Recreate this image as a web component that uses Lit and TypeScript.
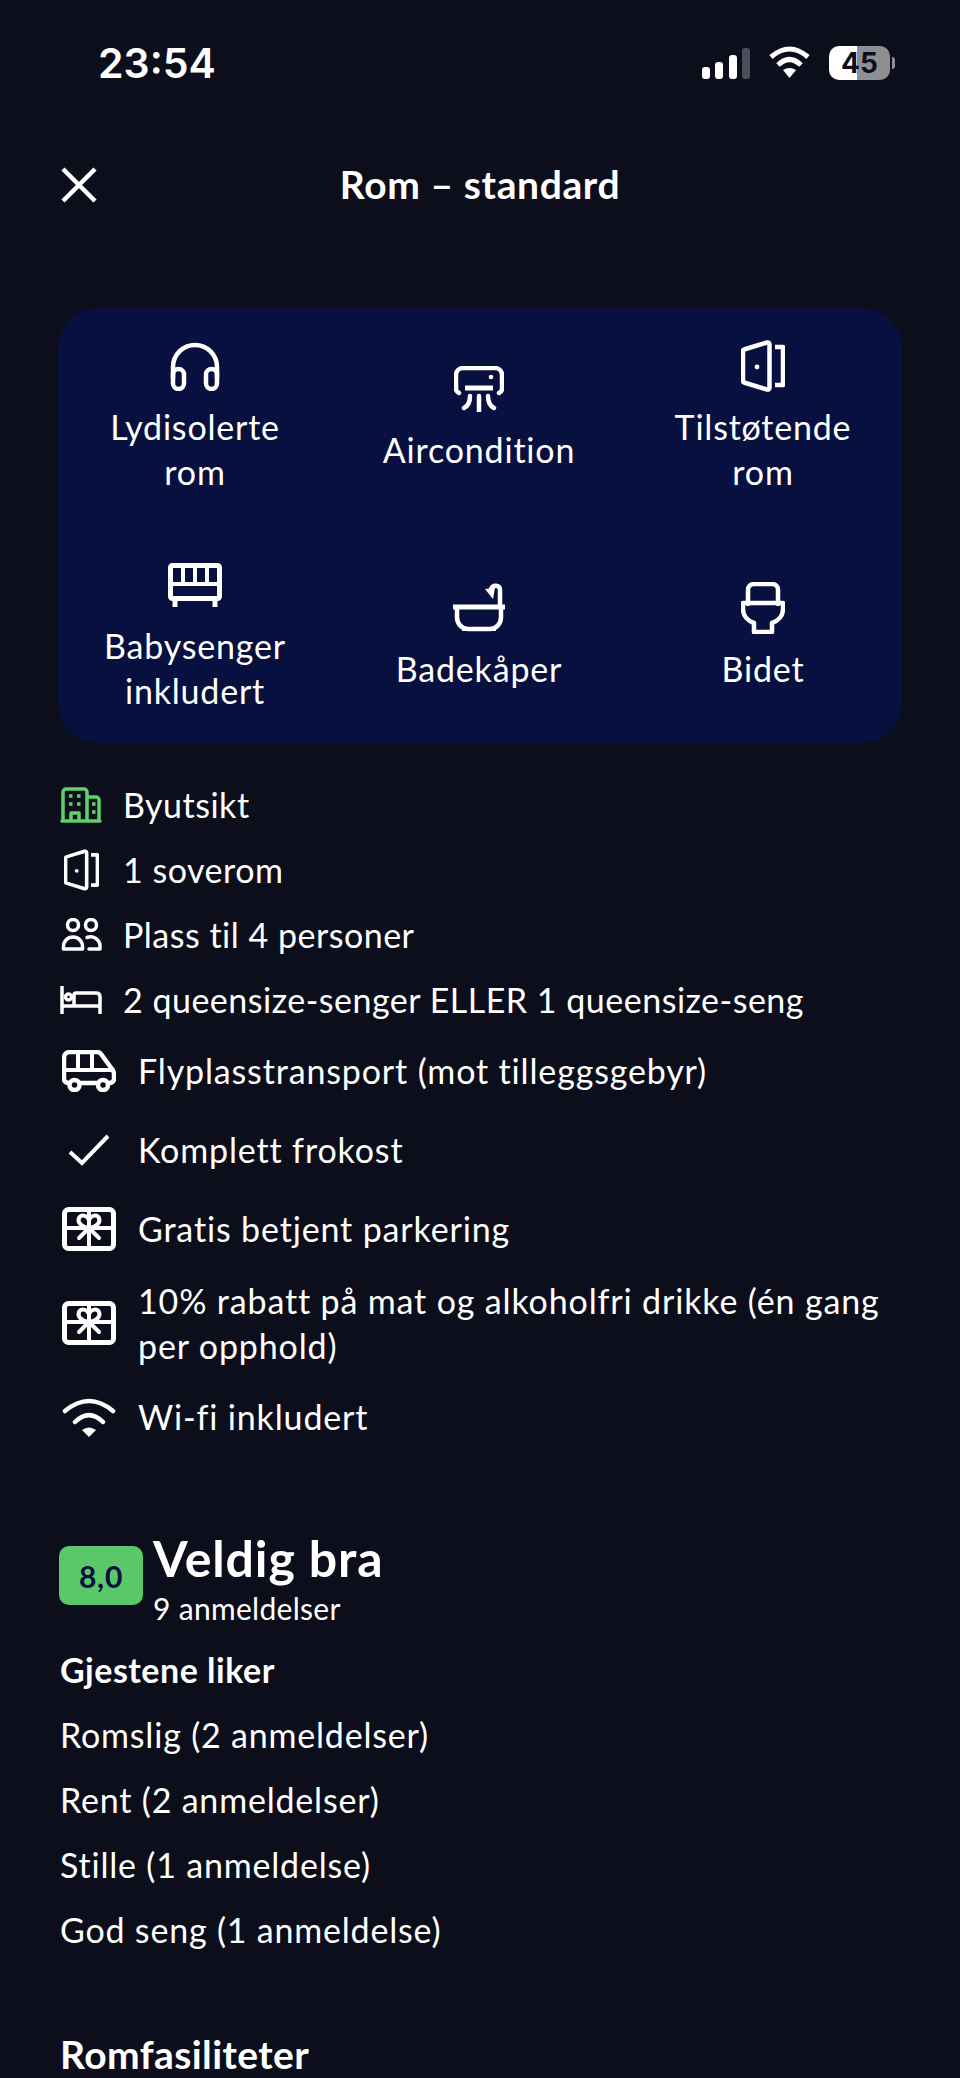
import { LitElement, html, css, svg } from "lit";
import { customElement } from "lit/decorators.js";

const I = (w: number, h: number, body: unknown, sw = 4.500, dw = w, dh = h) => html`<svg width=${dw} height=${dh} viewBox="0 0 ${w} ${h}" fill="none" stroke="currentColor" stroke-width=${sw} stroke-linecap="round" stroke-linejoin="round">${body}</svg>`;

const doorBody = svg`<path d="M3 9.500 26 2.500c1.500-.4 2.500.5 2.500 2V47.500c0 1.500-1 2.400-2.500 2L3 42.500c-.8-.3-1-.8-1-1.500V11c0-.7.2-1.200 1-1.500Z"/><path d="M34 7H42V45H34" stroke-linecap="butt"/><circle cx="16" cy="27" r="2.400" fill="currentColor" stroke="none"/>`;

const gift = I(54, 44, svg`<rect x="2.500" y="2.500" width="49" height="39" rx="4"/><path d="M2 21H52M27 2V42" stroke-width="4"/><path d="M27 21C20 20 15 16 17 11 19 7 25 8 27 13 29 8 35 7 37 11 39 16 34 20 27 21ZM27 21 17 31M27 21 37 31" stroke-width="4"/>`, 5);

const ICONS: Record<string, unknown> = {
  head: I(50, 49, svg`<path d="M3 36V25a22 22 0 0 1 44 0V36"/><rect x="3" y="27" width="11" height="20" rx="5.500"/><rect x="36" y="27" width="11" height="20" rx="5.500"/>`),
  ac: I(50, 46, svg`<path d="M5 27C3 26 2 24.500 2 23V9c0-4 3-7 7-7H41c4 0 7 3 7 7V23c0 1.500-1 3-3 4"/><path d="M11 22H39" stroke-width="5" stroke-linecap="butt"/><circle cx="37" cy="11" r="2.300" fill="currentColor" stroke="none"/><path d="M25 30V45M16 30C16 36 14 40 10 42M34 30C34 36 36 40 40 42"/>`),
  door: I(44, 52, doorBody),
  sdoor: I(44, 52, doorBody, 4.500, 35, 42),
  crib: I(54, 45, svg`<rect x="2.500" y="2.500" width="49" height="33" rx="2"/><path d="M15 2V20M27 2V20M39 2V20" stroke-width="4" stroke-linecap="butt"/><path d="M2 21H52" stroke-width="4"/><path d="M7 36V44M47 36V44" stroke-width="5" stroke-linecap="butt"/>`, 5),
  bath: I(54, 49, svg`<path d="M1 24H53" stroke-width="5" stroke-linecap="butt"/><path d="M5 25V34c0 7 5 12 11 12H38c6 0 11-5 11-12V25"/><path d="M48 23V7c0-5-7-6-9-1"/><path d="M33 6 43 5 41 16Z" fill="currentColor" stroke="none"/><path d="M12 45V48M42 45V48" stroke-width="4" stroke-linecap="butt"/>`),
  toilet: I(44, 52, svg`<path d="M7 22V8c0-3.500 2.500-6 6-6H31c3.500 0 6 2.500 6 6V22"/><path d="M2 21H42V27C42 34 37 39 31 41V50H13V41C7 39 2 34 2 27Z"/>`),
  city: I(42, 36, svg`<path d="M3 34V5a3 3 0 0 1 3-3H24a3 3 0 0 1 3 3V34M27 10H36a3 3 0 0 1 3 3V34M2 34H40M11 34V26H19V34" stroke-width="3.500"/><path d="M9 9h3.500M17 9h3.500M9 17h3.500M17 17h3.500M32 17h3.500M32 25h3.500" stroke-width="3.500" stroke-linecap="butt"/>`, 3.500),
  people: I(41, 33, svg`<circle cx="12" cy="7" r="5.500"/><path d="M2.500 31V28.500a9.500 9.500 0 0 1 19 0V31Z"/><circle cx="30" cy="7" r="5.500"/><path d="M26 19.500a9.500 9.500 0 0 1 13 9V31H28"/>`, 3.500),
  bed: I(42, 28, svg`<path d="M2 1V27M2 20H40M40 27V11c0-2.500-1.500-4-4-4H16c-1.500 0-2 1-2 2V20"/><circle cx="8.500" cy="11" r="3"/>`, 3.500),
  bus: I(54, 42, svg`<path d="M7 33C4 33 2 31.500 2 29V8c0-3.500 2.500-6 6-6H35c1.500 0 3 .6 4 2L50 19c1.500 2 2 3 2 5V29c0 2.500-2 4-5 4M18 33H35"/><path d="M2 20H51M16 2V20M30 2V20" stroke-width="4"/><circle cx="12.500" cy="35" r="5"/><circle cx="41" cy="35" r="5"/>`, 4.500),
  check: I(42, 32, svg`<path d="M2 18 14 29 40 2" stroke-linecap="butt" stroke-linejoin="miter"/>`, 4),
  gift,
  wifi: I(54, 40, svg`<path d="M3 14Q27-6 51 14M13 25Q27 11 41 25"/><path d="M20 33Q27 28 34 33L27 40Z" fill="currentColor" stroke="none"/>`, 4.500),
};

const AMENITIES = [
  ["head", "Lydisolerte rom"],
  ["ac", "Aircondition"],
  ["door", "Tilstøtende rom"],
  ["crib", "Babysenger inkludert"],
  ["bath", "Badekåper"],
  ["toilet", "Bidet"],
];
const SMALL = [
  ["city", "Byutsikt"],
  ["sdoor", "1 soverom"],
  ["people", "Plass til 4 personer"],
  ["bed", "2 queensize-senger ELLER 1 queensize-seng"],
];
const LARGE = [
  ["bus", "Flyplasstransport (mot tilleggsgebyr)"],
  ["check", "Komplett frokost"],
  ["gift", "Gratis betjent parkering"],
  ["gift", "10% rabatt på mat og alkoholfri drikke (én gang per opphold)"],
  ["wifi", "Wi-fi inkludert"],
];
const LIKES = ["Romslig (2 anmeldelser)", "Rent (2 anmeldelser)", "Stille (1 anmeldelse)", "God seng (1 anmeldelse)"];

@customElement("app-root")
export class AppRoot extends LitElement {
  static styles = css`
    :host { display: block; width: 960px; height: 2078px; overflow: hidden; background: #0c0e1b; color: #fff; font-family: "Lato", "Noto Sans", sans-serif; font-size: 34px; letter-spacing: 0.5px; }
    .status { height: 126px; box-sizing: border-box; padding: 43px 70px 0 98px; display: flex; justify-content: space-between; align-items: flex-start; letter-spacing: 0; }
    .time { font-family: "Inter", sans-serif; font-weight: 600; font-size: 41px; line-height: 40px; }
    .sys { display: flex; align-items: flex-start; gap: 19px; padding-top: 3px; }
    .bars { display: flex; align-items: flex-end; gap: 5.500px; height: 31px; margin-top: 2px; }
    .bars i { width: 8px; background: #fff; border-radius: 3px; }
    .bars i.off { background: #4a4d5a; }
    .batt { position: relative; width: 61px; height: 34px; border-radius: 10px; background: linear-gradient(90deg, #fff 46%, #8e8e93 46%); color: #0c0e1b; font-family: "Inter", sans-serif; font-weight: 700; font-size: 28px; line-height: 34px; text-align: center; }
    .batt::after { content: ""; position: absolute; left: 63px; top: 11px; width: 3px; height: 12px; border-radius: 0 3px 3px 0; background: #8e8e93; }
    .nav { height: 118px; position: relative; display: flex; align-items: center; justify-content: center; font-size: 39px; font-weight: 700; letter-spacing: 0.6px; }
    .nav svg { position: absolute; left: 60px; top: 40px; }
    .nav span { position: relative; top: -1px; }
    .card { margin: 64px 58px 0; height: 435px; box-sizing: border-box; background: #08103f; border-radius: 40px; padding: 29px 18px 0 16px; display: grid; grid-template-columns: repeat(3, 1fr); column-gap: 42px; grid-auto-rows: 158px; row-gap: 61px; }
    .cell { display: flex; flex-direction: column; align-items: center; justify-content: center; text-align: center; gap: 10px; line-height: 45px; letter-spacing: 0.8px; }
    .cell .lbl { padding: 0 20px; }
    .ibox { width: 56px; height: 56px; display: flex; align-items: center; justify-content: center; }
    .list { padding: 29px 60px 0; }
    .row { display: flex; align-items: center; min-height: 65px; }
    .row .ic { width: 42px; display: flex; justify-content: center; margin-right: 21px; flex: none; }
    .row.city svg { color: #5ed16b; }
    .big { padding: 0 40px 0 62px; margin-top: -1px; letter-spacing: 0.85px; }
    .big .row { min-height: 79px; line-height: 45px; }
    .big .row .ic { width: 54px; margin-right: 22px; }
    .big .row.two { min-height: 109px; }
    .rating { margin: 75px 0 0 59px; display: flex; align-items: flex-start; gap: 10px; }
    .badge { width: 84px; height: 59px; margin-top: 15px; border-radius: 10px; background: #5ac869; color: #08103f; font-weight: 700; font-size: 30px; letter-spacing: 0.8px; display: flex; align-items: center; justify-content: center; }
    .rtitle { font-size: 50px; font-weight: 700; line-height: 54px; letter-spacing: 0.9px; }
    .rsub { font-size: 30px; line-height: 40px; margin-top: 3px; letter-spacing: 0.3px; }
    .likes { padding: 17px 60px 0; letter-spacing: 0.8px; }
    .likes div { line-height: 65px; }
    .likes .h { font-weight: 700; line-height: 50px; margin-bottom: 7px; font-size: 34px; letter-spacing: 0.5px; }
    h2 { margin: 70px 0 0 60px; font-size: 39px; font-weight: 700; line-height: 44px; letter-spacing: 0.4px; }
  `;

  render() {
    return html`
      <div class="status">
        <div class="time">23:54</div>
        <div class="sys">
          <div class="bars"><i style="height:12px"></i><i style="height:17px"></i><i style="height:24px"></i><i class="off" style="height:31px"></i></div>
          <svg width="41" height="32" viewBox="0 0 41 32" fill="none" stroke="#fff" stroke-width="5"><path d="M2 11Q20.500-5 39 11M9 19Q20.500 8 32 19"/><path d="M14 24Q20.500 20 27 24L20.500 32Z" fill="#fff" stroke="none"/></svg>
          <div class="batt">45</div>
        </div>
      </div>
      <div class="nav">
        <svg width="38" height="38" viewBox="0 0 38 38" fill="none" stroke="#fff" stroke-width="4.500"><path d="M3 3 35 35M35 3 3 35"/></svg>
        <span>Rom – standard</span>
      </div>
      <div class="card">
        ${AMENITIES.map(([i, t]) => html`<div class="cell"><div class="ibox">${ICONS[i]}</div><div class="lbl">${t}</div></div>`)}
      </div>
      <div class="list">
        ${SMALL.map(([i, t]) => html`<div class="row ${i}"><div class="ic">${ICONS[i]}</div><div>${t}</div></div>`)}
      </div>
      <div class="big">
        ${LARGE.map(([i, t]) => html`<div class="row ${t.length > 50 ? "two" : ""}"><div class="ic">${ICONS[i]}</div><div>${t}</div></div>`)}
      </div>
      <div class="rating">
        <div class="badge">8,0</div>
        <div><div class="rtitle">Veldig bra</div><div class="rsub">9 anmeldelser</div></div>
      </div>
      <div class="likes">
        <div class="h">Gjestene liker</div>
        ${LIKES.map((t) => html`<div>${t}</div>`)}
      </div>
      <h2>Romfasiliteter</h2>
    `;
  }
}
